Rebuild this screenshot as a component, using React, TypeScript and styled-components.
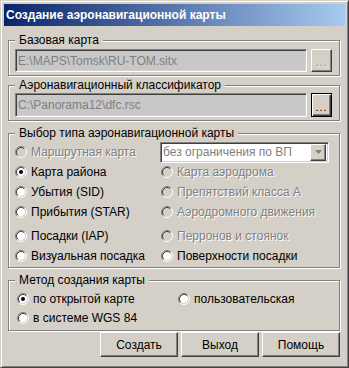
import React from "react";
import styled, { createGlobalStyle, css } from "styled-components";

const GlobalStyle = createGlobalStyle`
  html, body { margin: 0; padding: 0; background: #d4d0c8; }
  * { box-sizing: border-box; }
`;

const FONT = `"Liberation Sans", Arial, sans-serif`;

const Window = styled.div`
  width: 349px;
  height: 368px;
  background: #d4d0c8;
  border: 1px solid;
  border-color: #d4d0c8 #404040 #404040 #d4d0c8;
  box-shadow: inset 1px 1px 0 #ffffff, inset -1px -1px 0 #808080;
  padding: 3px;
  display: flex;
  flex-direction: column;
  font-family: ${FONT};
  font-size: 12px;
  color: #000;
`;

const TitleBar = styled.div`
  height: 22px;
  flex: none;
  display: flex;
  align-items: center;
  padding-left: 2px;
  background: linear-gradient(to right, #0a246a, #a6caf0);
  color: #fff;
  font-weight: bold;
  font-size: 12px;
`;

const Body = styled.div`
  display: flex;
  flex-direction: column;
  padding: 7px 5px 0 4px;
`;

const GroupBox = styled.fieldset<{ $top?: number; $pt?: number; $pb?: number }>`
  margin: ${(p) => p.$top ?? 0}px 0 0 0;
  padding: ${(p) => p.$pt ?? 2}px 7px ${(p) => p.$pb ?? 3}px 6px;
  border: 1px solid #808080;
  box-shadow: 1px 1px 0 #ffffff, inset 1px 1px 0 #ffffff;
  min-width: 0;
`;

const Legend = styled.legend`
  padding: 0 4px;
  margin-left: 0;
  line-height: 14px;
  background: #d4d0c8;
`;

const PathRow = styled.div`
  display: flex;
  gap: 4px;
  align-items: stretch;
`;

const sunken = css`
  border: 1px solid;
  border-color: #808080 #ffffff #ffffff #808080;
  box-shadow: inset 1px 1px 0 #404040, inset -1px -1px 0 #d4d0c8;
`;

const PathField = styled.div<{ $h: number }>`
  ${sunken};
  flex: 1;
  height: ${(p) => p.$h}px;
  background: #c8c8c8;
  color: #808080;
  display: flex;
  align-items: center;
  padding-left: 2px;
  white-space: nowrap;
  overflow: hidden;
`;

const raised = css`
  border: 1px solid;
  border-color: #ffffff #404040 #404040 #ffffff;
  box-shadow: inset -1px -1px 0 #808080;
  background: #d4d0c8;
`;

const BrowseButton = styled.div<{ $default?: boolean; $disabled?: boolean }>`
  ${raised};
  width: 21px;
  flex: none;
  display: flex;
  align-items: flex-end;
  justify-content: center;
  padding-bottom: 5px;
  font-size: 11px;
  line-height: 8px;
  letter-spacing: 1px;
  color: ${(p) => (p.$disabled ? "#808080" : "#000")};
  text-shadow: ${(p) => (p.$disabled ? "1px 1px 0 #fff" : "none")};
  ${(p) =>
    p.$default &&
    css`
      border: 1px solid #000;
      box-shadow: inset 1px 1px 0 #ffffff, inset -1px -1px 0 #404040,
        inset -2px -2px 0 #808080;
    `}
`;

const TypeGrid = styled.div`
  display: grid;
  grid-template-columns: 145px 1fr;
  grid-template-rows: repeat(4, 20px) 24px 20px;
  align-items: end;
`;

const MethodGrid = styled.div`
  display: grid;
  grid-template-columns: 161px 1fr;
  grid-template-rows: 19px 19px;
  align-items: center;
  padding-left: 2px;
`;

const RadioLabel = styled.label<{ $disabled?: boolean; $indent?: number }>`
  display: flex;
  align-items: center;
  gap: 4px;
  height: 20px;
  margin-left: ${(p) => p.$indent ?? 0}px;
  white-space: nowrap;
  color: ${(p) => (p.$disabled ? "#808080" : "#000")};
  text-shadow: ${(p) => (p.$disabled ? "1px 1px 0 #ffffff" : "none")};
`;

const RadioSvg = styled.svg`
  flex: none;
  width: 12px;
  height: 12px;
`;

function RadioMark({ checked, disabled }: { checked?: boolean; disabled?: boolean }) {
  return (
    <RadioSvg viewBox="0 0 12 12">
      <circle cx="6" cy="6" r="4.5" fill={disabled ? "#d4d0c8" : "#ffffff"} />
      <path d="M2.11 9.89 A5.5 5.5 0 0 1 9.89 2.11" fill="none" stroke="#808080" strokeWidth="1" />
      <path d="M9.89 2.11 A5.5 5.5 0 0 1 2.11 9.89" fill="none" stroke="#ffffff" strokeWidth="1" />
      <path d="M2.82 9.18 A4.5 4.5 0 0 1 9.18 2.82" fill="none" stroke="#404040" strokeWidth="1" />
      <path d="M9.18 2.82 A4.5 4.5 0 0 1 2.82 9.18" fill="none" stroke="#d4d0c8" strokeWidth="1" />
      {checked && <circle cx="6" cy="6" r="2" fill={disabled ? "#808080" : "#000"} />}
    </RadioSvg>
  );
}

function Radio({
  label,
  checked,
  disabled,
  indent,
}: {
  label: string;
  checked?: boolean;
  disabled?: boolean;
  indent?: number;
}) {
  return (
    <RadioLabel $disabled={disabled} $indent={indent}>
      <RadioMark checked={checked} disabled={disabled} />
      <span>{label}</span>
    </RadioLabel>
  );
}

const Combo = styled.div`
  ${sunken};
  height: 21px;
  width: 169px;
  align-self: center;
  background: #ffffff;
  display: flex;
  align-items: center;
  padding: 2px;
  color: #808080;
`;

const ComboText = styled.span`
  flex: 1;
  white-space: nowrap;
  overflow: hidden;
`;

const ComboArrow = styled.div`
  ${raised};
  width: 16px;
  height: 17px;
  flex: none;
  display: flex;
  align-items: center;
  justify-content: center;
`;

const ButtonBar = styled.div`
  display: flex;
  justify-content: flex-end;
  gap: 3px;
  margin-top: 1px;
`;

const DialogButton = styled.div`
  ${raised};
  width: 78px;
  height: 25px;
  display: flex;
  align-items: center;
  justify-content: center;
`;

export default function App() {
  return (
    <>
      <GlobalStyle />
      <Window>
        <TitleBar>Создание аэронавигационной карты</TitleBar>
        <Body>
          <GroupBox $pt={2} $pb={3}>
            <Legend>Базовая карта</Legend>
            <PathRow>
              <PathField $h={23}>{"E:\\MAPS\\Tomsk\\RU-TOM.sitx"}</PathField>
              <BrowseButton $disabled>...</BrowseButton>
            </PathRow>
          </GroupBox>

          <GroupBox $top={2} $pt={1} $pb={3}>
            <Legend>Аэронавигационный классификатор</Legend>
            <PathRow>
              <PathField $h={24}>{"C:\\Panorama12\\dfc.rsc"}</PathField>
              <BrowseButton $default>...</BrowseButton>
            </PathRow>
          </GroupBox>

          <GroupBox $top={5} $pt={2} $pb={1}>
            <Legend>Выбор типа аэронавигационной карты</Legend>
            <TypeGrid>
              <Radio label="Маршрутная карта" disabled />
              <Combo>
                <ComboText>без ограничения по ВП</ComboText>
                <ComboArrow>
                  <svg width="7" height="4" viewBox="0 0 7 4">
                    <path d="M0 0 H7 L3.5 4 Z" fill="#808080" />
                  </svg>
                </ComboArrow>
              </Combo>
              <Radio label="Карта района" checked />
              <Radio label="Карта аэродрома" disabled indent={1} />
              <Radio label="Убытия (SID)" />
              <Radio label="Препятствий класса А" disabled indent={1} />
              <Radio label="Прибытия (STAR)" />
              <Radio label="Аэродромного движения" disabled indent={1} />
              <Radio label="Посадки (IAP)" />
              <Radio label="Перронов и стоянок" disabled indent={1} />
              <Radio label="Визуальная посадка" />
              <Radio label="Поверхности посадки" indent={1} />
            </TypeGrid>
          </GroupBox>

          <GroupBox $top={5} $pt={2} $pb={3}>
            <Legend>Метод создания карты</Legend>
            <MethodGrid>
              <Radio label="по открытой карте" checked />
              <Radio label="пользовательская" />
              <Radio label="в системе WGS 84" />
            </MethodGrid>
          </GroupBox>

          <ButtonBar>
            <DialogButton>Создать</DialogButton>
            <DialogButton>Выход</DialogButton>
            <DialogButton>Помощь</DialogButton>
          </ButtonBar>
        </Body>
      </Window>
    </>
  );
}
